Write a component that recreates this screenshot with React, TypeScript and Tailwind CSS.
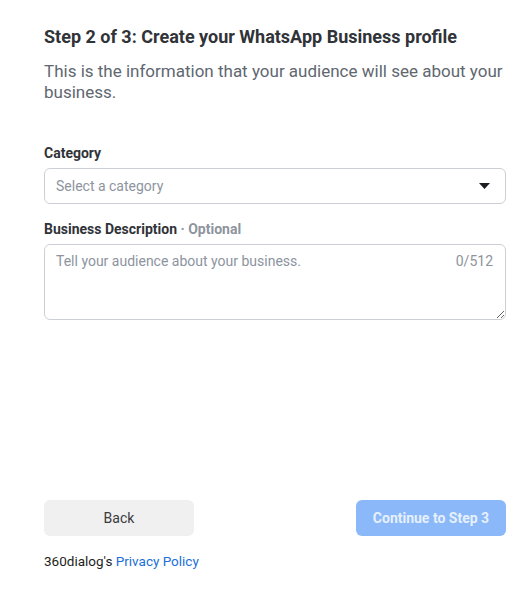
export default function App() {
  return (
    <div className="min-h-[591px] w-[530px] bg-white pl-[44px] pr-[24px] pt-[26px] font-['Roboto',sans-serif]">
      <h1 className="text-[18px] font-bold leading-[22px] text-[#303338]">
        Step 2 of 3: Create your WhatsApp Business profile
      </h1>
      <p className="mt-[13px] text-[17px] leading-[21px] text-[#606770]">
        This is the information that your audience will see about your business.
      </p>

      <div className="mt-[42px]">
        <label className="block text-[14px] font-bold leading-[16px] text-[#303338]">Category</label>
        <div className="mt-[7px] flex h-[36px] items-center justify-between rounded-[6px] border border-[#ccd0d5] pl-[11px] pr-[15px]">
          <span className="text-[14px] text-[#8d949e]">Select a category</span>
          <svg width="11" height="6" viewBox="0 0 11 6">
            <path d="M0 0h11L5.5 6z" fill="#1c1e21" />
          </svg>
        </div>
      </div>

      <div className="mt-[17px]">
        <label className="block text-[14px] font-bold leading-[16px] text-[#303338]">
          Business Description <span className="text-[#8d949e]">· Optional</span>
        </label>
        <div className="relative mt-[7px]">
          <textarea
            placeholder="Tell your audience about your business."
            className="block h-[76px] w-full resize-y rounded-[6px] border border-[#ccd0d5] px-[11px] py-[8px] text-[14px] leading-[17px] text-[#1c1e21] placeholder:text-[#8d949e] focus:outline-none"
          />
          <span className="absolute right-[13px] top-[9px] text-[14px] leading-[17px] text-[#8d949e]">0/512</span>
        </div>
      </div>

      <div className="mt-[180px] flex items-center justify-between">
        <button className="h-[36px] w-[150px] rounded-[6px] bg-[#f0f0f0] text-[14px] text-[#3a3b3d]">Back</button>
        <button className="h-[36px] w-[150px] rounded-[6px] bg-[#8ab8f8] text-[14px] font-bold text-[#e6f0fd]">
          Continue to Step 3
        </button>
      </div>

      <p className="mt-[17px] text-[13.5px] leading-[16px] text-[#1c1e21]">
        360dialog's <a className="text-[#216fdb]">Privacy Policy</a>
      </p>
    </div>
  );
}
